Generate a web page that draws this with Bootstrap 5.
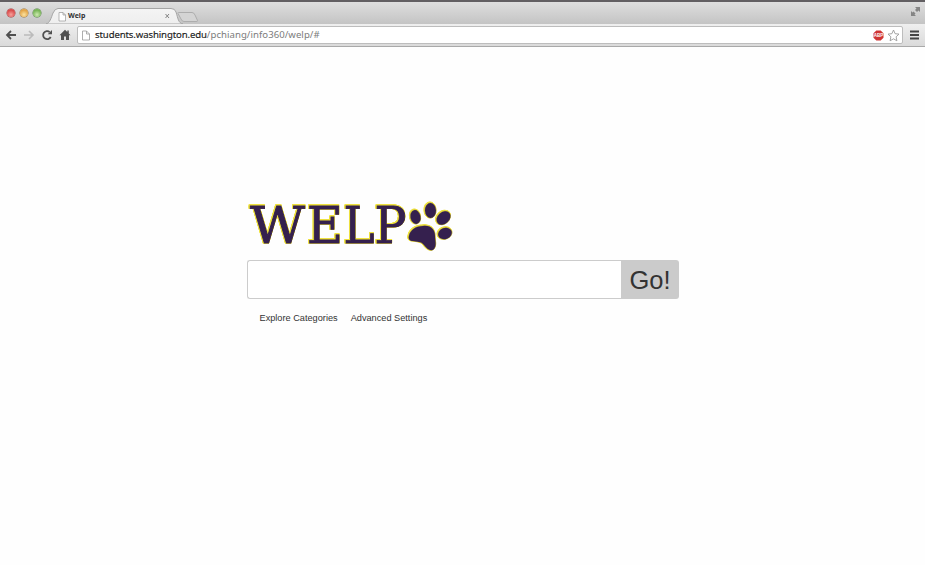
<!DOCTYPE html>
<html lang="en">
<head>
<meta charset="utf-8">
<title>Welp</title>
<link href="https://cdn.jsdelivr.net/npm/bootstrap@5.3.0/dist/css/bootstrap.min.css" rel="stylesheet">
<style>
body{background:#fefefe;font-family:"Liberation Sans",Arial,sans-serif;height:565px;overflow:hidden}
svg{display:block;flex:none}
.tabstrip{height:24px;border-top:2px solid #625f62;background:linear-gradient(#dedede,#c4c4c4)}
.lights{padding-left:7px;gap:5px;margin-top:7px}
.light{width:8px;height:8px;border-radius:50%}
.red{background:radial-gradient(circle at 50% 70%,#f7a09b,#d94b4b 65%);box-shadow:0 0 0 .5px #9a3a3c}
.yellow{background:radial-gradient(circle at 50% 70%,#fbe3a0,#e3a446 65%);box-shadow:0 0 0 .5px #94713b}
.green{background:radial-gradient(circle at 50% 70%,#cdeab0,#76b455 65%);box-shadow:0 0 0 .5px #4f7d40}
.tab-area{width:132px;height:22px;margin-left:5px}
.tab-title{font:bold 7px/10px "Noto Sans",sans-serif;color:#333;padding:9px 0 0 22px}
.newtab{margin-left:-1px;margin-top:9px}
.expand{margin:4px 4px 0 0}
.toolbar{height:23px;background:linear-gradient(#efefef,#dadada);border-bottom:1px solid #a9a9a9;padding:0 6px 0 5px}
.nav-icons{gap:6px}
.omnibox{height:18px;border:1px solid #bdbdbd;border-radius:2px;padding:0 2px 0 4px;margin-left:6px;margin-right:7px;gap:3px}
.address{font:9.6px/16px "Noto Sans",sans-serif;color:#7c7c7c;white-space:pre;padding-left:2px}
.address .host{color:#1c1c1c;letter-spacing:-.12px;-webkit-text-stroke:.15px #1c1c1c}
.address .path{letter-spacing:.04px}
.search-area{width:432px;margin:140px 0 0 247px}
.logo-text text{font-family:"DejaVu Serif",serif;font-size:51px}
.logo{fill:#35204e;stroke:#35204e;filter:drop-shadow(.8px 0 0 #efe23f) drop-shadow(-.8px 0 0 #efe23f) drop-shadow(0 .8px 0 #efe23f) drop-shadow(0 -.8px 0 #efe23f)}
.query,.query:focus{height:39px;border:1px solid #ccc;border-right:0;border-radius:3px 0 0 3px;background:#fff;box-shadow:none}
.go,.go:hover{width:58px;height:39px;background:#cbcbcb;color:#333;border:0;border-radius:0 3px 3px 0;font-size:25.5px;line-height:38px}
.links{padding:13px 0 0 12.500px;gap:13px;font-size:9.2px;line-height:12px}
.links a{color:#333}
</style>
<script src="https://cdn.jsdelivr.net/npm/bootstrap@5.3.0/dist/js/bootstrap.bundle.min.js"></script>
</head>
<body>
<header>
  <div class="tabstrip d-flex align-items-start">
    <div class="lights d-flex"><span class="light red"></span><span class="light yellow"></span><span class="light green"></span></div>
    <div class="tab-area position-relative">
      <svg class="position-absolute top-0 start-0" width="138" height="22" viewBox="0 0 138 22">
        <defs><linearGradient id="tabfill" x1="0" y1="0" x2="0" y2="1"><stop offset="0" stop-color="#f4f4f4"/><stop offset="1" stop-color="#eeeeee"/></linearGradient></defs>
        <path d="M0 22C4 21 5 16 7 11Q9 6.500 12 6.500H125Q129 6.500 130 10C132 16 132 21 137 22Z" fill="url(#tabfill)" stroke="#a5a5a5"/>
        <path d="M13 10.500h4l2.500 2.500v6H13zM17 10.500v2.500h2.500" fill="#fff" stroke="#999" stroke-width=".7"/>
        <path d="M119.500 12l3.500 4m0-4l-3.500 4" stroke="#777" stroke-width=".9"/>
      </svg>
      <div class="tab-title position-relative">Welp</div>
    </div>
    <svg class="newtab" width="22" height="12" viewBox="0 0 22 12"><path d="M1.500 1.500H15Q17 1.500 18 4L20.500 9.500Q21 10.500 19 10.500H7Q5 10.500 4 8L1 2.500Q.5 1.500 1.500 1.500Z" fill="#d4d4d4" stroke="#adadad"/></svg>
    <svg class="expand ms-auto" width="11" height="11" viewBox="0 0 11 11"><path d="M5 1H10V6L8.500 4.500 7 6 5 4 6.500 2.500ZM1 5V10H6L4.500 8.500 5.500 7.500 3.500 5.500 2.500 6.500Z" fill="#858585"/></svg>
  </div>
  <div class="toolbar d-flex align-items-center">
    <div class="nav-icons d-flex">
      <svg width="12" height="12" viewBox="0 0 12 12"><path d="M11 6H2.500M6 2L2 6l4 4" fill="none" stroke="#505050" stroke-width="1.800"/></svg>
      <svg width="12" height="12" viewBox="0 0 12 12"><path d="M1 6h8.500M6 2l4 4-4 4" fill="none" stroke="#bbb" stroke-width="1.600"/></svg>
      <svg width="12" height="12" viewBox="0 0 12 12"><path d="M9.700 8A4 4 0 1 1 8.700 3.100" fill="none" stroke="#505050" stroke-width="1.800"/><path d="M6.700 5.200H11V1Z" fill="#505050"/></svg>
      <svg width="12" height="12" viewBox="0 0 12 12"><path d="M6 .7L8.300 3V1.500H9.800V4.500L11.500 6.300H10V11H7V7.500H5V11H2V6.300H.5Z" fill="#505050"/></svg>
    </div>
    <div class="omnibox bg-white d-flex align-items-center flex-grow-1">
      <svg width="8" height="11" viewBox="0 0 8 11"><path d="M.5 1H4.500L7.500 4V10H.5ZM4.500 1V4H7.500" fill="#fff" stroke="#999" stroke-width=".8"/></svg>
      <div class="address"><span class="host">students.washington.edu</span><span class="path">/pchiang/info360/welp/#</span></div>
      <svg class="ms-auto" width="11" height="11" viewBox="0 0 11 11"><path d="M3.300.5H7.700L10.500 3.300V7.700L7.700 10.500H3.300L.5 7.700V3.300Z" fill="#cf3434"/><text x="5.500" y="7.200" text-anchor="middle" font-family="Liberation Sans" font-size="4.500" font-weight="bold" fill="#fff">ABP</text></svg>
      <svg width="13" height="13" viewBox="0 0 13 13"><path d="M6.500 1L8.100 4.700 12 5.100 9.100 7.800 9.900 11.800 6.500 9.800 3.100 11.800 3.900 7.800 1 5.100 4.900 4.700Z" fill="#fff" stroke="#999" stroke-width=".9"/></svg>
    </div>
    <svg width="9" height="10" viewBox="0 0 9 10"><path d="M0 1.500H9M0 5H9M0 8.500H9" stroke="#444" stroke-width="1.800"/></svg>
  </div>
</header>
<main class="search-area">
  <svg width="214" height="73" viewBox="247 187 214 73" role="img" aria-label="Welp">
    <g class="logo">
      <g class="logo-text" stroke-width=".9">
        <text x="250" y="242.500" textLength="55" lengthAdjust="spacingAndGlyphs">W</text>
        <text x="307" y="242.500" textLength="36" lengthAdjust="spacingAndGlyphs">E</text>
        <text x="343.500" y="242.500" textLength="31" lengthAdjust="spacingAndGlyphs">L</text>
        <text x="374.500" y="242.500" textLength="32" lengthAdjust="spacingAndGlyphs">P</text>
      </g>
      <g stroke-width=".3">
      <ellipse cx="415.500" cy="217" rx="5" ry="7" transform="rotate(-12 415.500 217)"/>
      <ellipse cx="430.500" cy="210.500" rx="5.500" ry="7.500" transform="rotate(-3 430.500 210.500)"/>
      <ellipse cx="443.500" cy="218" rx="5.800" ry="7.700" transform="rotate(48 443.500 218)"/>
      <ellipse cx="445" cy="233.500" rx="5.500" ry="7" transform="rotate(70 445 233.500)"/>
      <path d="M409 236C410 230 416 226 423 226C431 225 435 230 435 236C435 241 437 245 434 249C431 252 427 249 424 245C421 241 417 242 413 241C410 241 408 239 409 236Z"/>
      </g>
    </g>
  </svg>
  <form class="input-group flex-nowrap" onsubmit="return false">
    <input class="form-control query" type="text" aria-label="Search">
    <button class="btn go p-0" type="submit">Go!</button>
  </form>
  <nav class="links d-flex"><a class="text-decoration-none" href="#">Explore Categories</a><a class="text-decoration-none" href="#">Advanced Settings</a></nav>
</main>
</body>
</html>
